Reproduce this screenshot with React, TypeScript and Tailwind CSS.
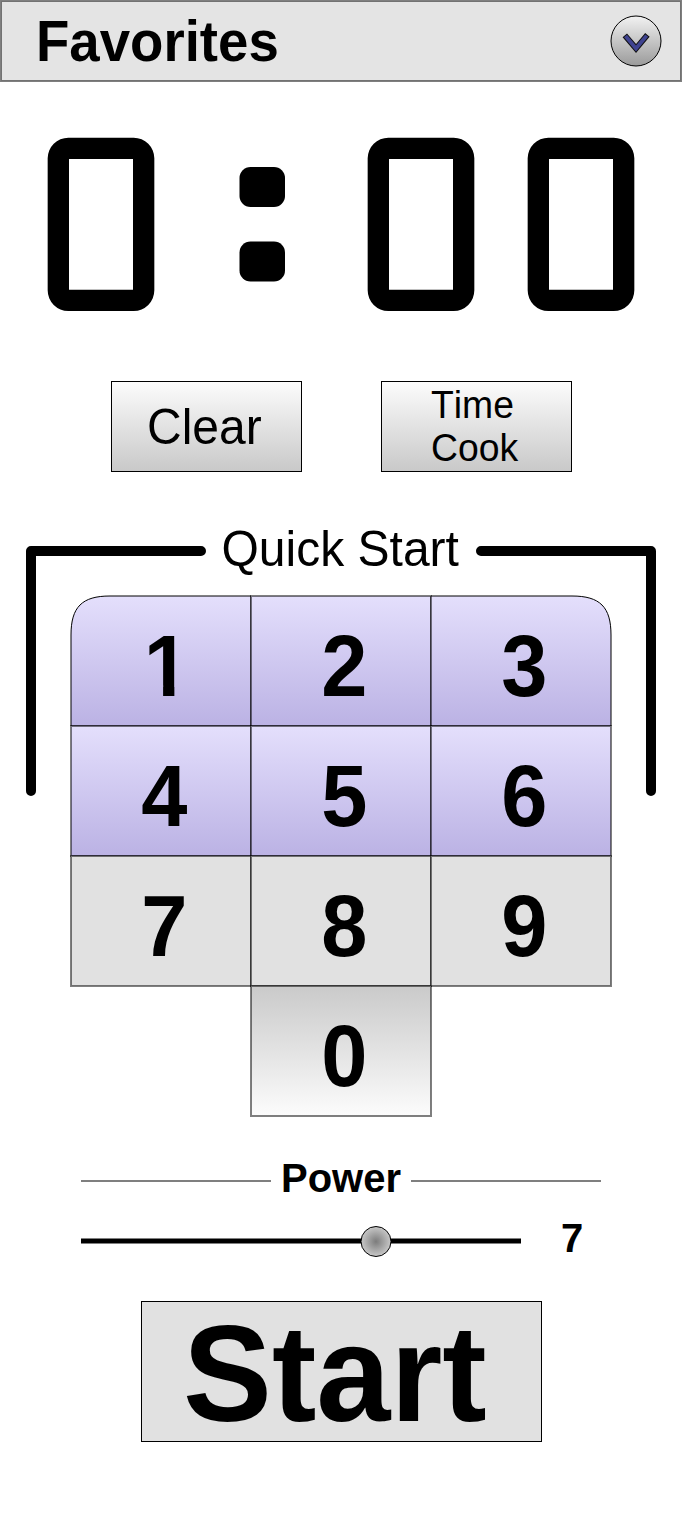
import type { ReactNode } from "react";

const LINE = "shadow-[0_0_0_1px_rgba(0,0,0,0.5),inset_0_0_0_1px_rgba(0,0,0,0.5)]";
const LILAC = `bg-linear-to-b from-[#e4dffc] to-[#bbb2e4] ${LINE}`;
const PLAIN = `bg-[#e1e1e1] ${LINE}`;
// Stretches glyphs slightly upwards from their baseline.
const TALL = "inline-block leading-none scale-y-[1.035] origin-[50%_84.65%]";

const KEYS = [
  { label: "1", look: "", corner: "", text: "translate-x-[2.6px] [clip-path:polygon(0_0,66.8%_0,66.8%_100%,41.9%_100%,41.9%_72%,0_72%)]" },
  { label: "2", look: LILAC },
  { label: "3", look: "", corner: "scale-x-[-1]" },
  { label: "4", look: LILAC },
  { label: "5", look: LILAC },
  { label: "6", look: LILAC },
  { label: "7", look: PLAIN },
  { label: "8", look: PLAIN },
  { label: "9", look: PLAIN },
  { label: "0", look: `bg-linear-to-b from-[#cacaca] to-[#fcfcfc] col-start-2 ${LINE}` },
];

function Header() {
  return (
    <header className={`mt-px ml-px flex h-20 w-[680px] items-center justify-between bg-[#e4e4e4] pr-[19px] pl-[35px] ${LINE}`}>
      <h1 className="flex pt-[4px] text-[54.6px] leading-none font-bold">
        <span className={TALL}>Favorites</span>
      </h1>
      <button aria-label="Open favorites">
        <svg width="52" height="52" viewBox="0 0 52 52" className="block" fill="none">
          <defs>
            <linearGradient id="knob" x1="0" y1="0" x2="0" y2="1">
              <stop offset="0" stopColor="#f2f2f2" />
              <stop offset="1" stopColor="#9a9a9a" />
            </linearGradient>
          </defs>
          <circle cx="26" cy="26" r="25" fill="url(#knob)" stroke="#000" />
          <path d="M14.800 20.300L26 33.500L37.400 19.800" stroke="#111" strokeWidth="5.800" />
          <path d="M15.500 21.100L26 33.500L36.700 20.600" stroke="#3f4390" strokeWidth="3.800" />
        </svg>
      </button>
    </header>
  );
}

function Digit() {
  return (
    <svg width="108" height="174" viewBox="0 0 108 174" className="block">
      <path
        fillRule="evenodd"
        d="M21.330 .67H86.670A20.670 20.670 0 0 1 107.330 21.330V153.330A20.670 20.670 0 0 1 86.670 174H21.330A20.670 20.670 0 0 1 .67 153.330V21.330A20.670 20.670 0 0 1 21.330 .67ZM22 22V152.670H86V22Z"
      />
    </svg>
  );
}

function Display() {
  return (
    <div className="mt-[56px] flex h-[174px] pl-[47px]" role="timer">
      <Digit />
      <svg width="46" height="116" viewBox="0 0 46 116" className="mt-[30px] ml-[84px] block">
        <rect x=".5" y="0" width="45.500" height="40" rx="11" />
        <rect x=".5" y="74.500" width="45.500" height="40" rx="11" />
      </svg>
      <div className="ml-[82px] flex gap-[52px]">
        <Digit />
        <Digit />
      </div>
    </div>
  );
}

function BoxButton({ children }: { children: ReactNode }) {
  return (
    <button className="flex h-[91px] w-[191px] items-center border border-black bg-linear-to-b from-[#fcfcfc] to-[#c9c9c9] pt-[2px] text-left">
      {children}
    </button>
  );
}

function RoundedCorner({ flip }: { flip: string }) {
  return (
    <svg width="182" height="132" viewBox="0 0 182 132" className={`absolute -top-px -left-px ${flip}`}>
      <defs>
        <linearGradient id="lilac" x1="0" y1="0" x2="0" y2="1">
          <stop offset="0" stopColor="#e4dffc" />
          <stop offset="1" stopColor="#bbb2e4" />
        </linearGradient>
      </defs>
      <path d="M1 131V40C1 12 12 1 40 1H181V131Z" fill="url(#lilac)" stroke="#000" />
    </svg>
  );
}

function QuickStart() {
  return (
    <section className="mt-[68px] grid">
      <svg width="682" height="260" viewBox="0 0 682 260" className="col-start-1 row-start-1 block" fill="none" stroke="#000" strokeWidth="10" strokeLinecap="round" strokeLinejoin="round">
        <path d="M31 251V11H201" />
        <path d="M651 251V11H481" />
      </svg>
      <div className="col-start-1 row-start-1">
        <h2 className="mt-[-15px] flex h-[71px] pt-[2px] pl-[221.5px] text-[48px] leading-none">
          <span className={TALL}>Quick Start</span>
        </h2>
        <div className="ml-[71px] grid w-[540px] auto-rows-[130px] grid-cols-3">
          {KEYS.map((key) => (
            <button key={key.label} className={`relative flex items-center justify-center pt-[12px] pl-[6.5px] text-[83px] leading-none font-bold ${key.look}`}>
              {key.corner !== undefined && <RoundedCorner flip={key.corner} />}
              <span className={`relative inline-block origin-[50%_84.65%] scale-y-[1.045] ${key.text ?? ""}`}>{key.label}</span>
            </button>
          ))}
        </div>
      </div>
    </section>
  );
}

function Power() {
  return (
    <section className="mx-[81px] mt-[40px] w-[520px]">
      <div className="flex h-[50px] items-center">
        <span className="h-[2px] w-[190px] bg-[#7f7f7f]" />
        <h3 className="-mt-[6px] flex w-[140px] justify-center text-[40px] leading-none font-bold">
          <span className={TALL}>Power</span>
        </h3>
        <span className="h-[2px] w-[190px] bg-[#7f7f7f]" />
      </div>
      <div className="mt-[14px] flex h-[42px] items-center">
        <svg width="440" height="42" viewBox="0 0 440 42" className="block">
          <defs>
            <radialGradient id="thumb">
              <stop offset="0" stopColor="#7c7c7c" />
              <stop offset="1" stopColor="#c8c8c8" />
            </radialGradient>
          </defs>
          <path d="M0 21H440" stroke="#000" strokeWidth="5" />
          <circle cx="295" cy="21.500" r="15" fill="url(#thumb)" stroke="#000" />
        </svg>
        <output className="-mt-[6px] ml-[40px] flex text-[40px] leading-none font-bold">
          <span className={TALL}>7</span>
        </output>
      </div>
    </section>
  );
}

export default function App() {
  return (
    <main className="flex h-[1522px] w-[682px] flex-col bg-white font-['Liberation_Sans',sans-serif] text-black [font-kerning:none]">
      <Header />
      <Display />
      <div className="mt-[70px] flex gap-[79px] pl-[111px]">
        <BoxButton>
          <span className={`ml-[35px] text-[48px] ${TALL}`}>Clear</span>
        </BoxButton>
        <BoxButton>
          <span className="flex flex-col gap-[5.67px] pl-[49px] text-[37.33px] leading-none">
            <span className={TALL}>Time</span>
            <span className={TALL}>Cook</span>
          </span>
        </BoxButton>
      </div>
      <QuickStart />
      <Power />
      <button className="mt-[39px] ml-[141px] flex h-[141px] w-[401px] items-center border border-black bg-[#e1e1e1] pt-[7px] pl-[41px] text-[133.3px] leading-none font-bold">
        <span className={TALL}>Start</span>
      </button>
    </main>
  );
}
